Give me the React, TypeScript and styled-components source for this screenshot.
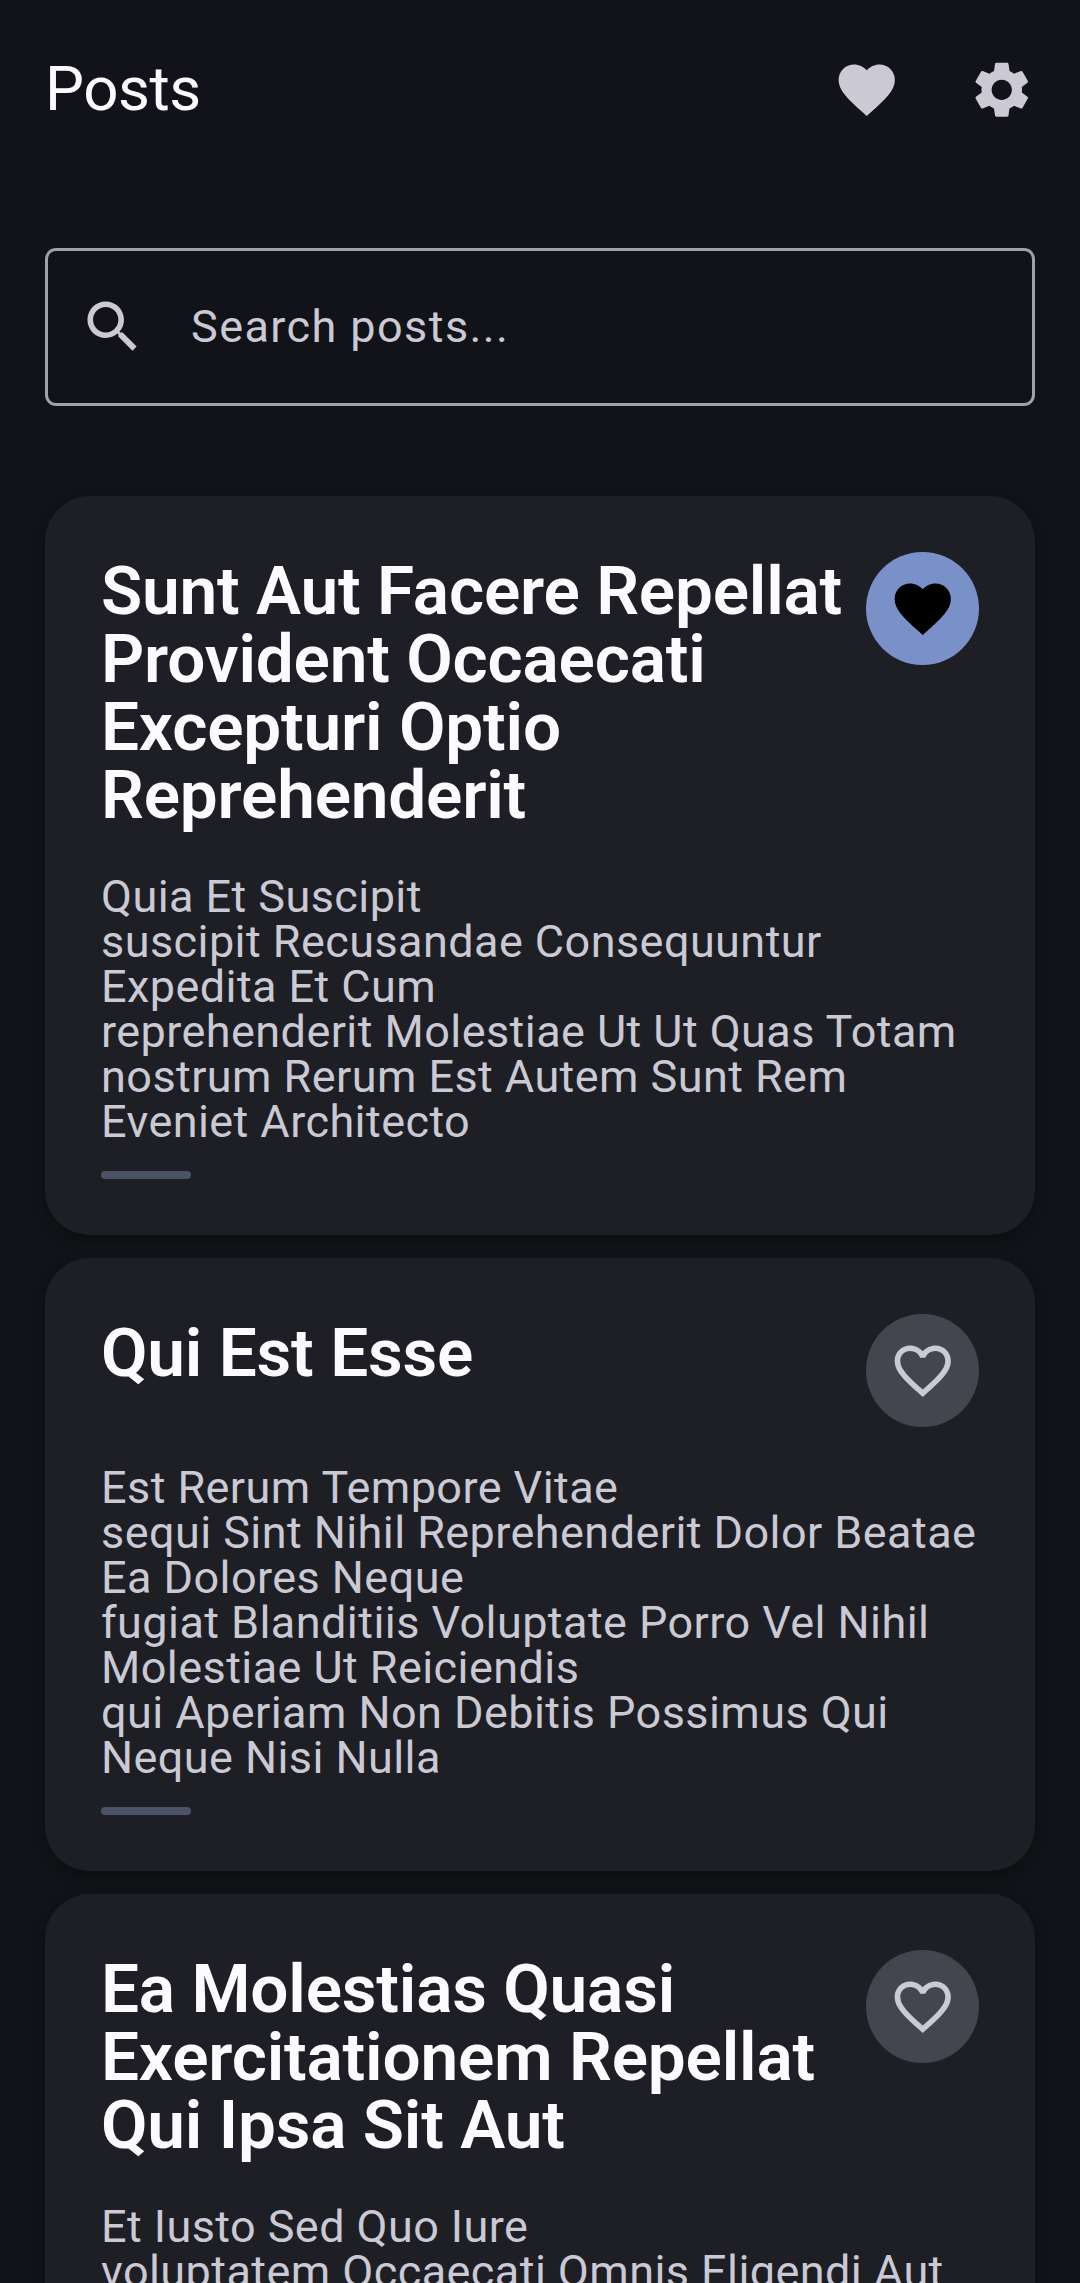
import React from 'react';
import styled, { createGlobalStyle } from 'styled-components';

const Global = createGlobalStyle`
  *{box-sizing:border-box}
  html,body{margin:0;background:#121318}
  body{width:1080px;height:2283px;overflow:hidden;font-family:Roboto,"Noto Sans",sans-serif}
  h1,h2,p{margin:0;font-weight:400}
`;
const Screen = styled.div`
  width:1080px;height:2283px;overflow:hidden;background:#121318;
  padding:0 45px;display:flex;flex-direction:column;
`;
const AppBar = styled.header`
  height:180px;display:flex;align-items:center;justify-content:space-between;flex:none;
`;
const AppTitle = styled.h1`
  color:#fcfaff;font-size:61.9px;line-height:78px;letter-spacing:-.5px;padding-bottom:3px;
`;
const Actions = styled.div`display:flex;gap:67.5px;margin-right:-.75px;`;
const Icon = styled.svg<{ $size: number; $color: string }>`
  display:block;width:${p => p.$size}px;height:${p => p.$size}px;fill:${p => p.$color};
`;
const Search = styled.label`
  margin-top:68px;height:158px;flex:none;border:3px solid #a1a1ac;border-radius:11px;
  display:flex;align-items:center;padding:0 31px;gap:44.5px;
`;
const Placeholder = styled.span`
  color:#cac9d4;font-size:45px;letter-spacing:1.42px;line-height:52px;
`;
const List = styled.main`
  margin-top:90px;display:flex;flex-direction:column;gap:23px;
`;
const Card = styled.article`
  background:#1e1f25;border-radius:45px;padding:56px;flex:none;
  box-shadow:0 5px 14px rgba(0,0,0,.32);
`;
const Head = styled.div`display:flex;justify-content:space-between;align-items:flex-start;`;
const Title = styled.h2`
  color:#fcfaff;font-weight:600;font-size:67.5px;line-height:68px;letter-spacing:-.2px;
  padding:5px 0 7px;white-space:pre;
`;
const Fav = styled.button<{ $on?: boolean }>`
  border:0;padding:0;width:113px;height:113px;border-radius:50%;flex:none;
  display:flex;align-items:center;justify-content:center;
  background:${p => (p.$on ? '#7a90c8' : '#44464f')};
`;
const Body = styled.p`
  color:#cac9d4;font-size:45px;line-height:45px;letter-spacing:.43px;white-space:pre;margin-top:38px;
`;
const Accent = styled.div`
  width:90px;height:8px;border-radius:4px;background:#4c5267;margin-top:27px;
`;

const HEART = 'M12 21.35l-1.45-1.32C5.4 15.36 2 12.28 2 8.5 2 5.42 4.42 3 7.5 3c1.74 0 3.41.81 4.5 2.09C13.09 3.81 14.76 3 16.5 3 19.58 3 22 5.42 22 8.5c0 3.78-3.4 6.86-8.55 11.54L12 21.35z';
const HEART_OUTLINE = 'M16.5 3c-1.74 0-3.41.81-4.5 2.09C10.91 3.81 9.24 3 7.5 3 4.42 3 2 5.42 2 8.5c0 3.78 3.4 6.86 8.55 11.54L12 21.35l1.45-1.32C18.6 15.36 22 12.28 22 8.5 22 5.42 19.58 3 16.5 3zm-4.4 15.55l-.1.1-.1-.1C7.14 14.24 4 11.39 4 8.5 4 6.5 5.5 5 7.5 5c1.54 0 3.04.99 3.57 2.36h1.87C13.46 5.99 14.96 5 16.5 5c2 0 3.5 1.5 3.5 3.5 0 2.89-3.14 5.74-7.9 10.05z';
const GEAR = 'M19.14 12.94c.04-.3.06-.61.06-.94 0-.32-.02-.64-.07-.94l2.03-1.58c.18-.14.23-.41.12-.61l-1.92-3.32c-.12-.22-.37-.29-.59-.22l-2.39.96c-.5-.38-1.03-.7-1.62-.94l-.36-2.54c-.04-.24-.24-.41-.48-.41h-3.84c-.24 0-.43.17-.47.41l-.36 2.54c-.59.24-1.13.57-1.62.94l-2.39-.96c-.22-.08-.47 0-.59.22L2.74 8.87c-.12.21-.08.47.12.61l2.03 1.58c-.05.3-.09.63-.09.94s.02.64.07.94l-2.03 1.58c-.18.14-.23.41-.12.61l1.92 3.32c.12.22.37.29.59.22l2.39-.96c.5.38 1.03.7 1.62.94l.36 2.54c.05.24.24.41.48.41h3.84c.24 0 .44-.17.47-.41l.36-2.54c.59-.24 1.13-.56 1.62-.94l2.39.96c.22.08.47 0 .59-.22l1.92-3.32c.12-.22.07-.47-.12-.61l-2.01-1.58zM12 15.6c-1.98 0-3.6-1.62-3.6-3.6s1.62-3.6 3.6-3.6 3.6 1.62 3.6 3.6-1.62 3.6-3.6 3.6z';
const SEARCH = 'M15.5 14h-.79l-.28-.27C15.41 12.59 16 11.11 16 9.5 16 5.91 13.09 3 9.5 3S3 5.91 3 9.5 5.91 16 9.5 16c1.61 0 3.09-.59 4.23-1.57l.27.28v.79l5 4.99L20.49 19l-4.99-5zm-6 0C7.01 14 5 11.99 5 9.5S7.01 5 9.5 5 14 7.01 14 9.5 11.99 14 9.5 14z';

const Glyph = ({ d, size = 67.5, color = '#cac9d4' }: { d: string; size?: number; color?: string }) => (
  <Icon viewBox="0 0 24 24" $size={size} $color={color}><path d={d} /></Icon>
);

const posts = [
  { liked: true, title: 'Sunt Aut Facere Repellat\nProvident Occaecati\nExcepturi Optio\nReprehenderit',
    body: 'Quia Et Suscipit\nsuscipit Recusandae Consequuntur\nExpedita Et Cum\nreprehenderit Molestiae Ut Ut Quas Totam\nnostrum Rerum Est Autem Sunt Rem\nEveniet Architecto' },
  { liked: false, title: 'Qui Est Esse',
    body: 'Est Rerum Tempore Vitae\nsequi Sint Nihil Reprehenderit Dolor Beatae\nEa Dolores Neque\nfugiat Blanditiis Voluptate Porro Vel Nihil\nMolestiae Ut Reiciendis\nqui Aperiam Non Debitis Possimus Qui\nNeque Nisi Nulla' },
  { liked: false, title: 'Ea Molestias Quasi\nExercitationem Repellat\nQui Ipsa Sit Aut',
    body: 'Et Iusto Sed Quo Iure\nvoluptatem Occaecati Omnis Eligendi Aut' },
];

export default function App() {
  return (
    <>
      <Global />
      <Screen>
        <AppBar>
          <AppTitle>Posts</AppTitle>
          <Actions><Glyph d={HEART} /><Glyph d={GEAR} /></Actions>
        </AppBar>
        <Search><Glyph d={SEARCH} /><Placeholder>Search posts...</Placeholder></Search>
        <List>
          {posts.map(post => (
            <Card key={post.title}>
              <Head>
                <Title>{post.title}</Title>
                <Fav $on={post.liked}>
                  <Glyph d={post.liked ? HEART : HEART_OUTLINE} color={post.liked ? '#000' : undefined} />
                </Fav>
              </Head>
              <Body>{post.body}</Body>
              <Accent />
            </Card>
          ))}
        </List>
      </Screen>
    </>
  );
}
